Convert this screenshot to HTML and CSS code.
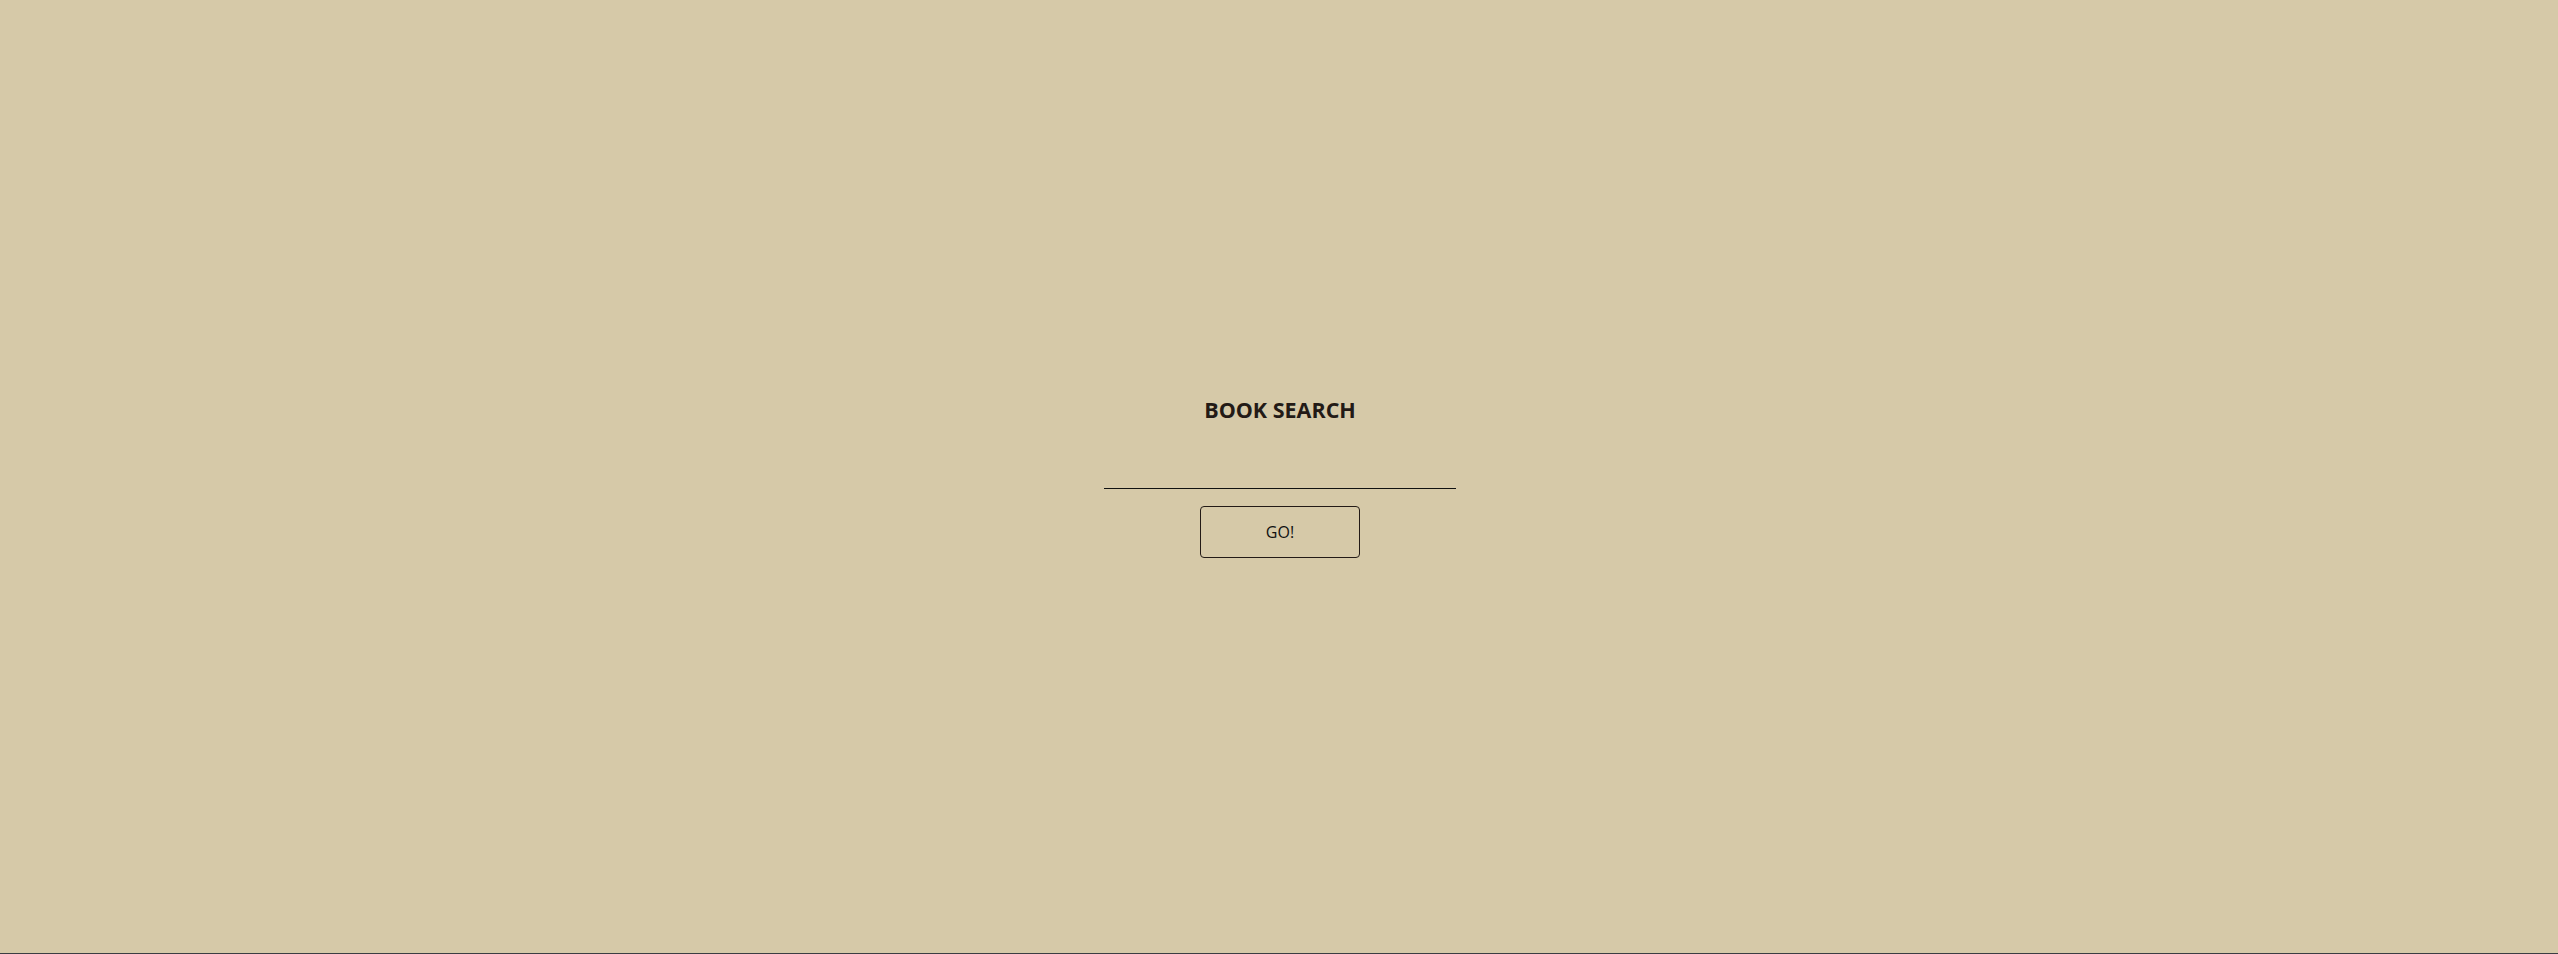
FILE: index.html
```html
<!DOCTYPE html>
<html lang="en">
<head>
<meta charset="utf-8">
<title>Book Search</title>
<link rel="stylesheet" href="styles.css">
</head>
<body>
<main class="page">
  <form class="search">
    <h1 class="title">BOOK SEARCH</h1>
    <input class="query" type="text" aria-label="Search books">
    <button class="go" type="button">GO!</button>
  </form>
</main>
<div class="taskbar"></div>
</body>
</html>
```
FILE: styles.css
```css
html, body {
  margin: 0;
  padding: 0;
  height: 100%;
}
body {
  background: #d6c9a8;
  font-family: "Open Sans", "Liberation Sans", sans-serif;
  color: #231a16;
  display: flex;
  flex-direction: column;
}
.page {
  flex: 1;
  display: flex;
  align-items: center;
  justify-content: center;
  padding: 0 0 1px 2px;
}
.search {
  display: flex;
  flex-direction: column;
  align-items: center;
}
.title {
  margin: 0;
  font-size: 21.5px;
  line-height: 30px;
  font-weight: 700;
  color: #231a16;
}
.query {
  margin-top: 24px;
  width: 352px;
  height: 40px;
  box-sizing: border-box;
  background: transparent;
  border: none;
  border-bottom: 1px solid #111;
  outline: none;
  font-family: inherit;
  font-size: 16px;
  padding: 0 4px;
}
.go {
  margin-top: 17px;
  width: 160px;
  height: 52px;
  box-sizing: border-box;
  background: transparent;
  border: 1px solid #231a16;
  border-radius: 4px;
  font-family: inherit;
  font-size: 16px;
  color: #111;
  cursor: pointer;
}
.taskbar {
  height: 1px;
  background: #3a3d42;
}
```
